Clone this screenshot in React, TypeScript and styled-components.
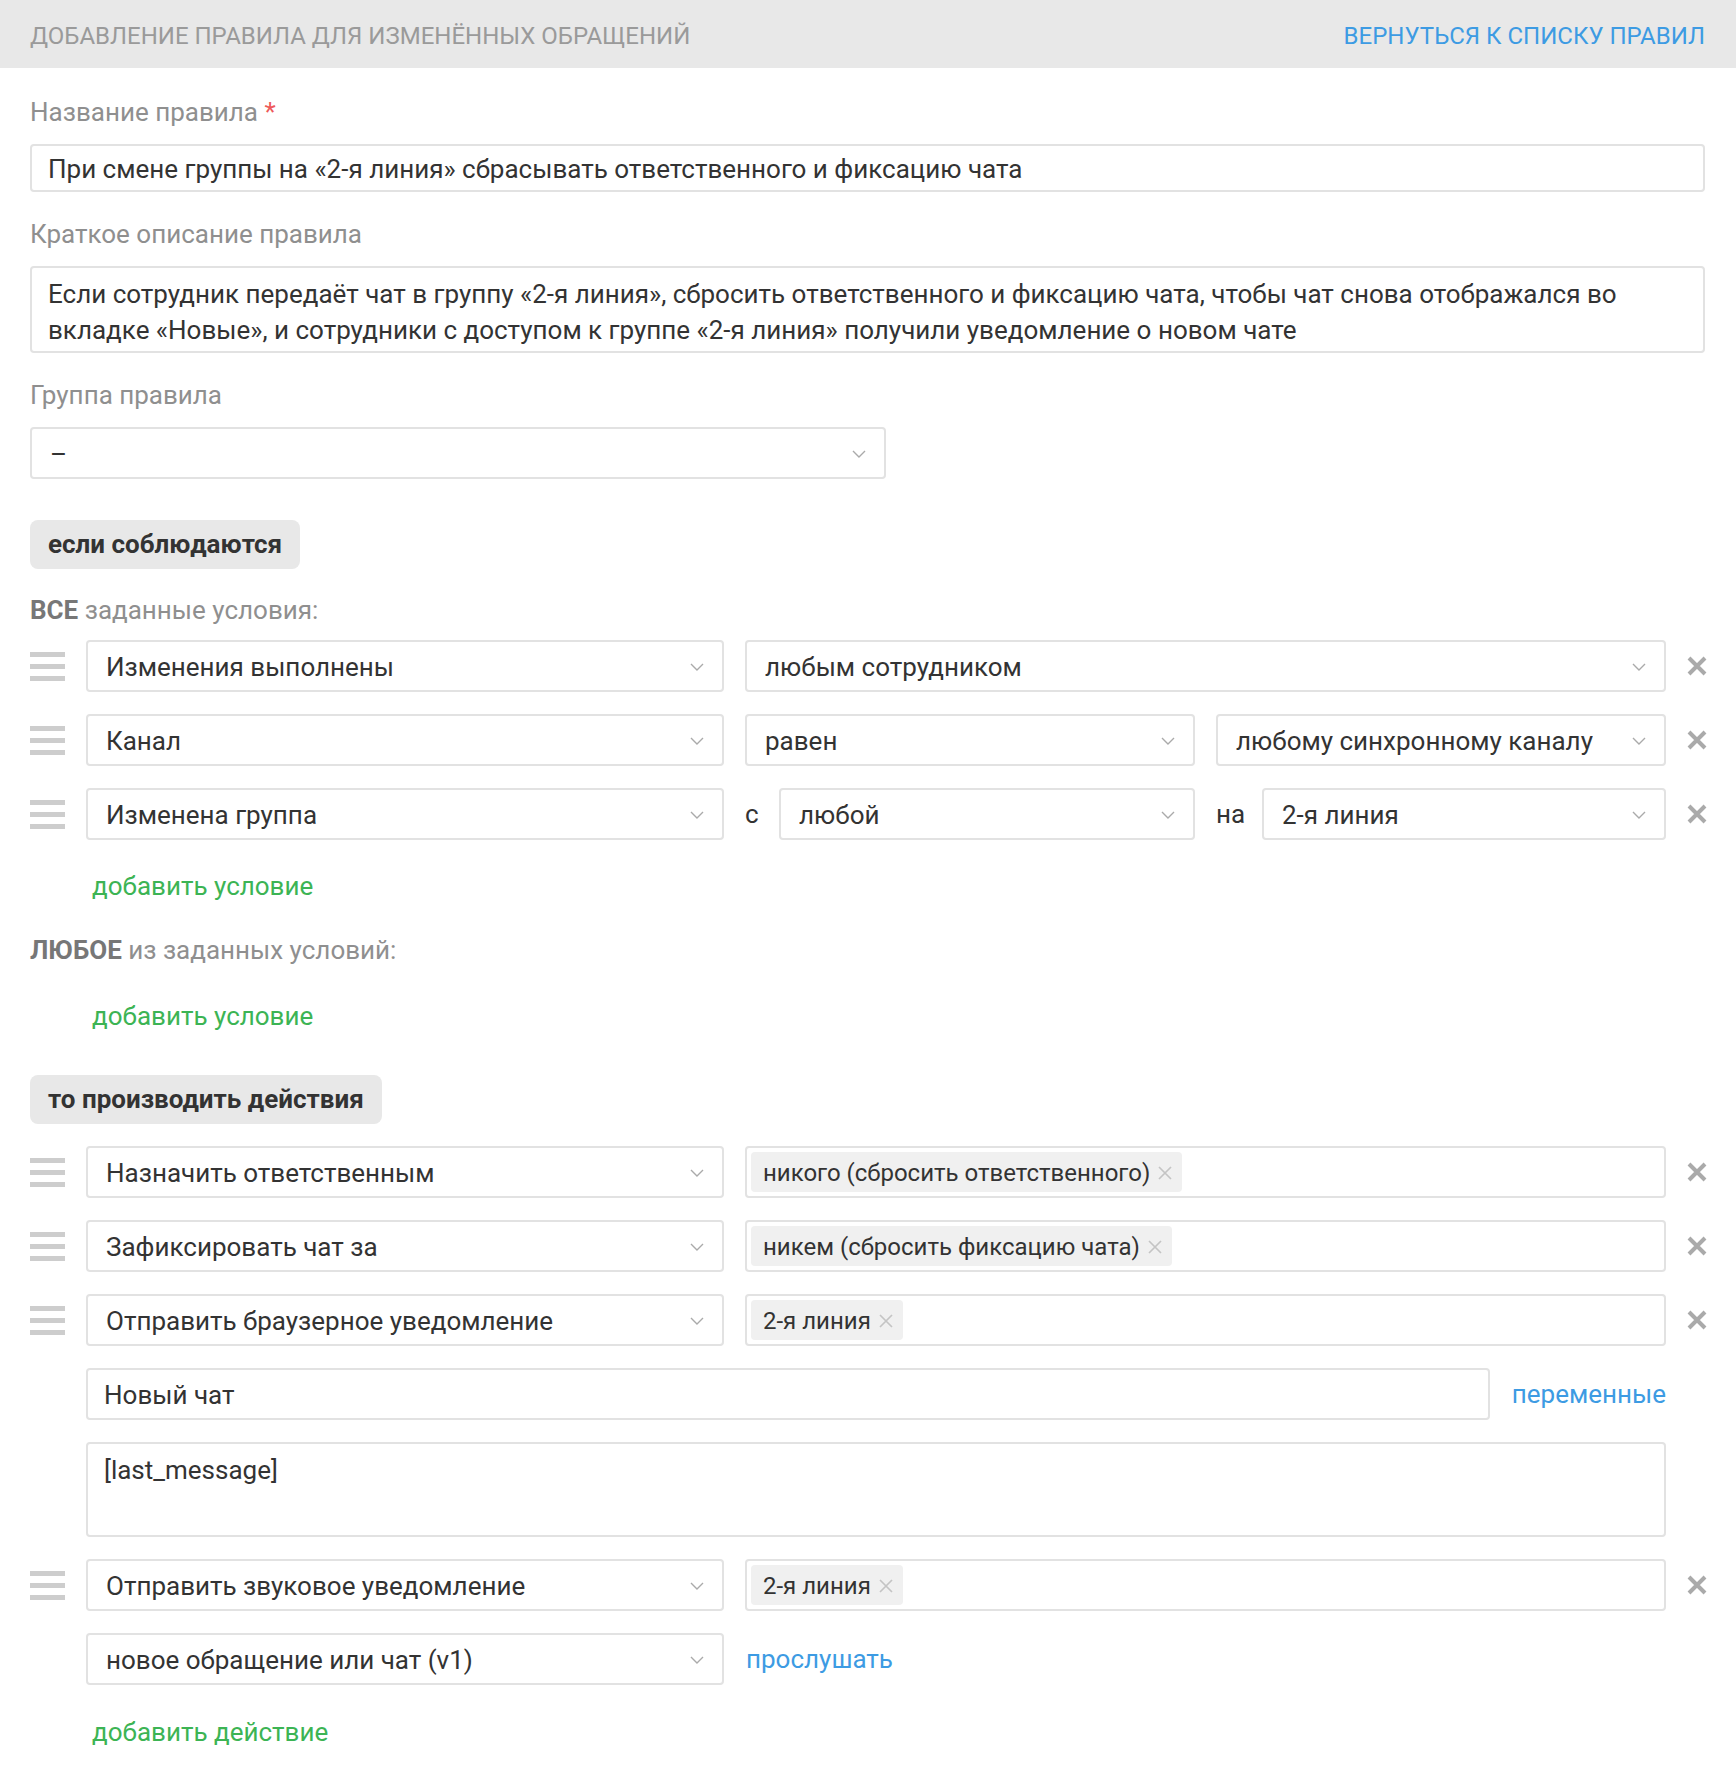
import styled, { createGlobalStyle } from "styled-components";

const GlobalStyle = createGlobalStyle`
  html, body {
    margin: 0;
    padding: 0;
    background: #fff;
  }
  body {
    font-family: Roboto, "Liberation Sans", sans-serif;
    color: #333;
  }
`;

function Chevron() {
  return (
    <svg width="14" height="8" viewBox="0 0 14 8">
      <polyline points="1,1 7,7 13,1" fill="none" stroke="#aaa" strokeWidth="1.4" />
    </svg>
  );
}

function DeleteIcon() {
  return (
    <svg width="22" height="22" viewBox="0 0 22 22">
      <path d="M3 3 L19 19 M19 3 L3 19" stroke="#aaa" strokeWidth="4" />
    </svg>
  );
}

function ChipClose() {
  return (
    <svg width="14" height="14" viewBox="0 0 14 14">
      <path d="M1 1 L13 13 M13 1 L1 13" stroke="#c4c4c4" strokeWidth="1.7" />
    </svg>
  );
}

type SelectProps = { value: string; width?: string };

function Select({ value, width }: SelectProps) {
  return (
    <StyledSelect $width={width}>
      <span>{value}</span>
      <Chevron />
    </StyledSelect>
  );
}

function Handle() {
  return (
    <StyledHandle>
      <i />
      <i />
      <i />
    </StyledHandle>
  );
}

function Tags({ items }: { items: string[] }) {
  return (
    <StyledTagBox>
      {items.map((t) => (
        <StyledChip key={t}>
          {t}
          <ChipClose />
        </StyledChip>
      ))}
    </StyledTagBox>
  );
}

function App() {
  return (
    <>
      <GlobalStyle />
      <StyledHeader>
        <StyledTitle>Добавление правила для изменённых обращений</StyledTitle>
        <StyledBackLink>Вернуться к списку правил</StyledBackLink>
      </StyledHeader>

      <StyledBody>
        <StyledLabel>
          Название правила <StyledStar>*</StyledStar>
        </StyledLabel>
        <StyledInput>При смене группы на «2-я линия» сбрасывать ответственного и фиксацию чата</StyledInput>

        <StyledLabel>Краткое описание правила</StyledLabel>
        <StyledTextArea>
          Если сотрудник передаёт чат в группу «2-я линия», сбросить ответственного и фиксацию чата, чтобы чат снова отображался во
          вкладке «Новые», и сотрудники с доступом к группе «2-я линия» получили уведомление о новом чате
        </StyledTextArea>

        <StyledLabel>Группа правила</StyledLabel>
        <Select value="–" width="856px" />

        <StyledBadge>если соблюдаются</StyledBadge>

        <StyledCondTitle>
          <b>ВСЕ</b> заданные условия:
        </StyledCondTitle>

        <StyledRows>
          <StyledRow>
            <Handle />
            <StyledCells>
              <Select value="Изменения выполнены" />
              <StyledWide>
                <Select value="любым сотрудником" />
              </StyledWide>
            </StyledCells>
            <StyledDelete>
              <DeleteIcon />
            </StyledDelete>
          </StyledRow>
          <StyledRow>
            <Handle />
            <StyledCells>
              <Select value="Канал" />
              <Select value="равен" />
              <Select value="любому синхронному каналу" />
            </StyledCells>
            <StyledDelete>
              <DeleteIcon />
            </StyledDelete>
          </StyledRow>
          <StyledRow>
            <Handle />
            <StyledCells>
              <Select value="Изменена группа" />
              <StyledPair>
                <StyledWord $w="34px">с</StyledWord>
                <Select value="любой" />
              </StyledPair>
              <StyledPair>
                <StyledWord $w="46px">на</StyledWord>
                <Select value="2-я линия" />
              </StyledPair>
            </StyledCells>
            <StyledDelete>
              <DeleteIcon />
            </StyledDelete>
          </StyledRow>
        </StyledRows>

        <StyledAddLink>добавить условие</StyledAddLink>

        <StyledCondTitle $top="28px">
          <b>ЛЮБОЕ</b> из заданных условий:
        </StyledCondTitle>
        <StyledAddLink $top="30px">добавить условие</StyledAddLink>

        <StyledBadge>то производить действия</StyledBadge>

        <StyledRows $top="22px">
          <StyledRow>
            <Handle />
            <StyledCells>
              <Select value="Назначить ответственным" />
              <StyledWide>
                <Tags items={["никого (сбросить ответственного)"]} />
              </StyledWide>
            </StyledCells>
            <StyledDelete>
              <DeleteIcon />
            </StyledDelete>
          </StyledRow>
          <StyledRow>
            <Handle />
            <StyledCells>
              <Select value="Зафиксировать чат за" />
              <StyledWide>
                <Tags items={["никем (сбросить фиксацию чата)"]} />
              </StyledWide>
            </StyledCells>
            <StyledDelete>
              <DeleteIcon />
            </StyledDelete>
          </StyledRow>
          <StyledRow>
            <Handle />
            <StyledCells>
              <Select value="Отправить браузерное уведомление" />
              <StyledWide>
                <Tags items={["2-я линия"]} />
              </StyledWide>
            </StyledCells>
            <StyledDelete>
              <DeleteIcon />
            </StyledDelete>
          </StyledRow>
          <StyledSubRow>
            <StyledLine>
              <StyledInput $grow>Новый чат</StyledInput>
              <StyledBlueLink>переменные</StyledBlueLink>
            </StyledLine>
          </StyledSubRow>
          <StyledSubRow>
            <StyledMessage>[last_message]</StyledMessage>
          </StyledSubRow>
          <StyledRow>
            <Handle />
            <StyledCells>
              <Select value="Отправить звуковое уведомление" />
              <StyledWide>
                <Tags items={["2-я линия"]} />
              </StyledWide>
            </StyledCells>
            <StyledDelete>
              <DeleteIcon />
            </StyledDelete>
          </StyledRow>
          <StyledSubRow>
            <StyledLine>
              <Select value="новое обращение или чат (v1)" width="638px" />
              <StyledBlueLink>прослушать</StyledBlueLink>
            </StyledLine>
          </StyledSubRow>
        </StyledRows>

        <StyledAddLink $top="29px">добавить действие</StyledAddLink>
      </StyledBody>
    </>
  );
}

export default App;

const StyledHeader = styled.div`
  box-sizing: border-box;
  height: 68px;
  background: #e8e8e8;
  display: flex;
  align-items: center;
  justify-content: space-between;
  padding: 4px 31px 0 30px;
  font-size: 24px;
  text-transform: uppercase;
`;

const StyledTitle = styled.div`
  color: #9a9a9a;
`;

const StyledBackLink = styled.a`
  color: #3d9be3;
  cursor: pointer;
`;

const StyledBody = styled.div`
  padding: 26px 31px 28px 30px;
  font-size: 26px;
  line-height: 36px;
`;

const StyledLabel = styled.div`
  color: #8f8f8f;
  margin-bottom: 14px;
  div + & {
    margin-top: 24px;
  }
`;

const StyledStar = styled.span`
  color: #ee5a5a;
`;

const StyledInput = styled.div<{ $grow?: boolean }>`
  box-sizing: border-box;
  height: ${(p) => (p.$grow ? "52px" : "48px")};
  border: 2px solid #e2e2e2;
  border-radius: 4px;
  padding: 2px 16px 0 16px;
  display: flex;
  align-items: center;
  color: #333;
  ${(p) => (p.$grow ? "flex: 1;" : "")}
`;

const StyledTextArea = styled.div`
  box-sizing: border-box;
  height: 87px;
  border: 2px solid #e2e2e2;
  border-radius: 4px;
  padding: 8px 16px 6px;
`;

const StyledSelect = styled.div<{ $width?: string }>`
  box-sizing: border-box;
  width: ${(p) => p.$width || "100%"};
  height: 52px;
  border: 2px solid #e2e2e2;
  border-radius: 4px;
  padding: 2px 18px 0 18px;
  display: flex;
  align-items: center;
  justify-content: space-between;
  background: #fff;
  span {
    white-space: nowrap;
    overflow: hidden;
  }
  svg {
    flex-shrink: 0;
  }
`;

const StyledBadge = styled.div`
  display: inline-block;
  margin-top: 41px;
  height: 49px;
  line-height: 49px;
  padding: 0 18px;
  background: #e8e8e8;
  border-radius: 8px;
  font-weight: 700;
  color: #333;
`;

const StyledCondTitle = styled.div<{ $top?: string }>`
  margin-top: ${(p) => p.$top || "23px"};
  color: #8f8f8f;
  b {
    color: #777;
  }
`;

const StyledRows = styled.div<{ $top?: string }>`
  margin-top: ${(p) => p.$top || "12px"};
  display: flex;
  flex-direction: column;
  gap: 22px;
`;

const StyledRow = styled.div`
  display: grid;
  grid-template-columns: 56px 1fr 39px;
  align-items: center;
`;

const StyledSubRow = styled.div`
  padding-left: 56px;
  padding-right: 39px;
`;

const StyledHandle = styled.div`
  display: flex;
  flex-direction: column;
  gap: 7px;
  i {
    display: block;
    width: 35px;
    height: 5px;
    background: #cdcdcd;
  }
`;

const StyledCells = styled.div`
  display: grid;
  grid-template-columns: 638px 1fr 1fr;
  column-gap: 21px;
  align-items: center;
`;

const StyledWide = styled.div`
  grid-column: 2 / span 2;
`;

const StyledPair = styled.div`
  display: flex;
  align-items: center;
`;

const StyledWord = styled.span<{ $w: string }>`
  flex: 0 0 ${(p) => p.$w};
  color: #333;
`;

const StyledDelete = styled.div`
  display: flex;
  justify-content: flex-end;
  margin-right: -3px;
  cursor: pointer;
`;

const StyledTagBox = styled.div`
  box-sizing: border-box;
  height: 52px;
  border: 2px solid #e2e2e2;
  border-radius: 4px;
  padding: 4px;
  display: flex;
  align-items: center;
`;

const StyledChip = styled.span`
  display: inline-flex;
  align-items: center;
  gap: 8px;
  height: 40px;
  padding: 2px 10px 0 12px;
  box-sizing: border-box;
  background: #f0f0f0;
  border-radius: 4px;
  color: #333;
  font-size: 24px;
`;

const StyledLine = styled.div`
  display: flex;
  align-items: center;
  gap: 22px;
`;

const StyledBlueLink = styled.a`
  color: #3d9be3;
  cursor: pointer;
  white-space: nowrap;
`;

const StyledMessage = styled.div`
  box-sizing: border-box;
  height: 95px;
  border: 2px solid #e2e2e2;
  border-radius: 4px;
  padding: 8px 16px;
`;

const StyledAddLink = styled.a<{ $top?: string }>`
  display: block;
  margin-top: ${(p) => p.$top || "28px"};
  padding-left: 62px;
  color: #3cb454;
  cursor: pointer;
`;
